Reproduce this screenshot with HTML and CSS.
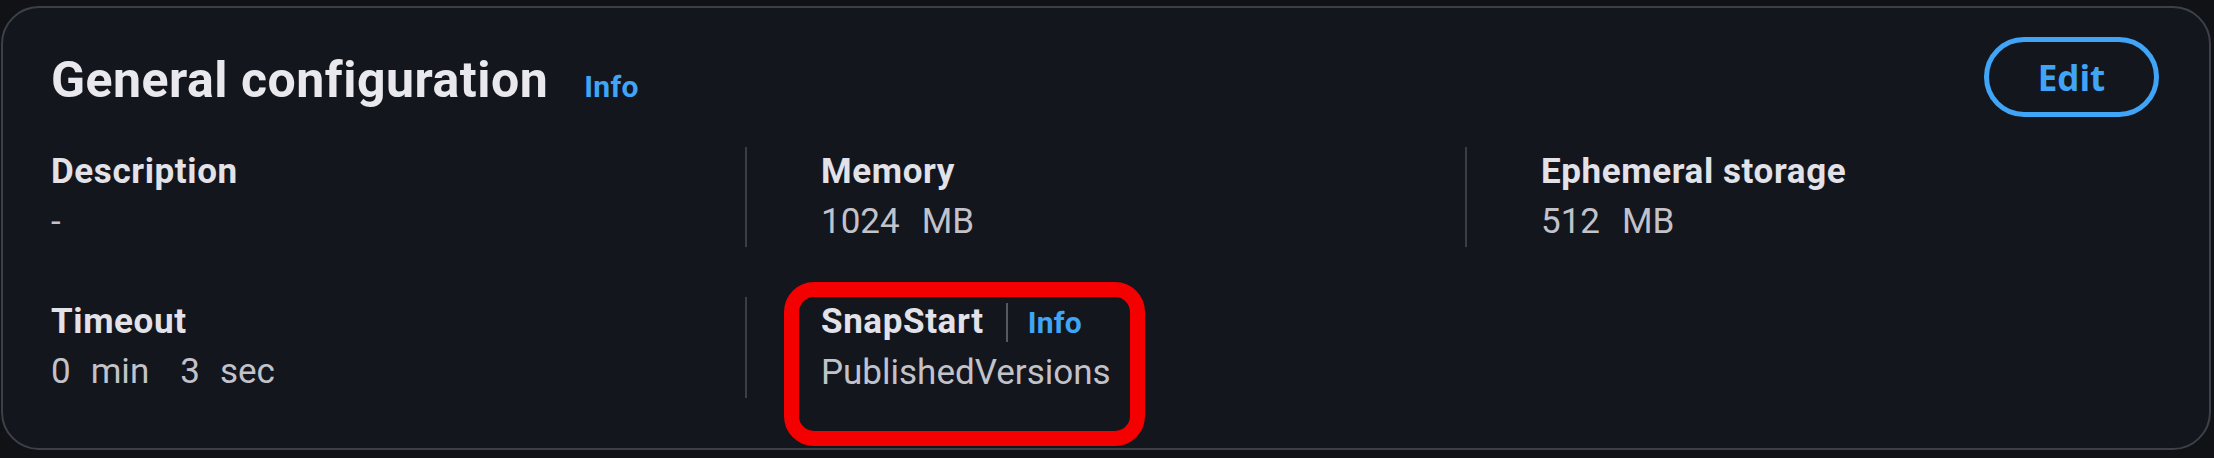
FILE: index.html
```html
<!DOCTYPE html>
<html lang="en">
<head>
<meta charset="utf-8">
<title>General configuration</title>
<link rel="stylesheet" href="styles.css">
</head>
<body>
<section class="card">
  <div class="header">
    <h2 class="title">General configuration <a class="info info-title">Info</a></h2>
    <button class="edit">Edit</button>
  </div>
  <div class="grid">
    <div class="cell">
      <div class="label">Description</div>
      <div class="value">-</div>
    </div>
    <div class="cell divided">
      <div class="label">Memory</div>
      <div class="value units"><span>1024</span><span>MB</span></div>
    </div>
    <div class="cell divided">
      <div class="label">Ephemeral storage</div>
      <div class="value units"><span>512</span><span>MB</span></div>
    </div>
    <div class="cell">
      <div class="label">Timeout</div>
      <div class="value groups">
        <span class="units"><span>0</span><span>min</span></span>
        <span class="units"><span>3</span><span>sec</span></span>
      </div>
    </div>
    <div class="cell divided snap">
      <div class="label label-info">SnapStart<span class="sep"></span><a class="info">Info</a></div>
      <div class="value">PublishedVersions</div>
      <div class="highlight"></div>
    </div>
    <div class="cell"></div>
  </div>
</section>
</body>
</html>
```

FILE: styles.css
```css
html, body {
  margin: 0;
  padding: 0;
  background: #111216;
}
body {
  width: 2214px;
  height: 458px;
  overflow: hidden;
  font-family: Roboto, "Liberation Sans", sans-serif;
}
.card {
  margin: 6px 3px 0 1px;
  border: 2px solid #3c4048;
  border-radius: 38px;
  background: #13161d;
  padding: 29px 50px 50px 48px;
}
.header {
  display: flex;
  justify-content: space-between;
  align-items: flex-start;
}
.title {
  margin: 13px 0 0 0;
  display: flex;
  align-items: baseline;
  gap: 36px;
  font: 700 50px/60px Roboto, "Liberation Sans", sans-serif;
  letter-spacing: 0.5px;
  color: #e8e8ed;
}
.info {
  font: 700 30px/50px Roboto, "Liberation Sans", sans-serif;
  letter-spacing: 0.3px;
  color: #40a5f6;
  text-decoration: none;
}
.edit {
  box-sizing: border-box;
  width: 175px;
  height: 80px;
  border: 5px solid #40a5f6;
  border-radius: 40px;
  background: transparent;
  color: #40a5f6;
  font: 700 35px/1 "Open Sans", "Noto Sans", sans-serif;
  padding: 0;
}
.grid {
  margin-top: 30px;
  display: grid;
  grid-template-columns: 694px 720px 1fr;
  row-gap: 50px;
}
.cell {
  min-height: 100px;
}
.divided {
  border-left: 2px solid #3a3e46;
  padding-left: 74px;
}
.label {
  font: 700 35px/50px Roboto, "Liberation Sans", sans-serif;
  letter-spacing: 0.6px;
  color: #e2e2e8;
}
.value {
  font: 400 35px/50px Roboto, "Liberation Sans", sans-serif;
  color: #c2c2ca;
}
.units {
  display: flex;
  gap: 22px;
}
.groups {
  display: flex;
  gap: 31px;
}
.groups .units {
  gap: 20px;
}
.label-info {
  display: flex;
  align-items: baseline;
}
.sep {
  align-self: center;
  width: 2px;
  height: 39px;
  margin: 0 20px 0 22px;
  background: #555a62;
}
.snap {
  position: relative;
}
.highlight {
  position: absolute;
  left: 37px;
  top: -15px;
  width: 361px;
  height: 164px;
  box-sizing: border-box;
  border: 15px solid #f40000;
  border-radius: 30px;
}
```
